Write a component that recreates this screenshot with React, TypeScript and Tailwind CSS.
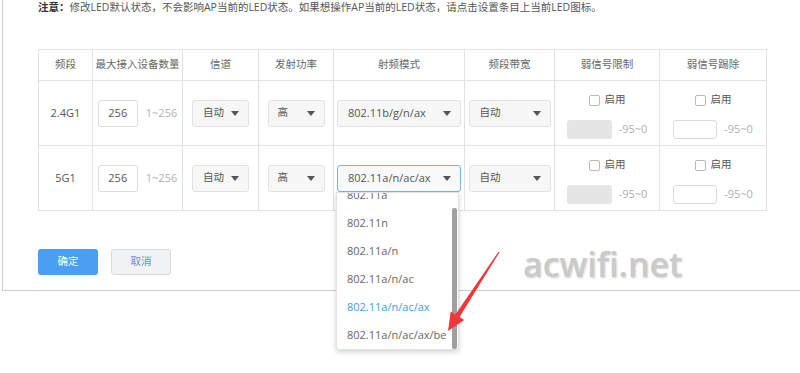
import React from "react";

const Caret = () => (
  <svg width="8" height="5" viewBox="0 0 8 5" className="shrink-0">
    <path d="M0 0 L8 0 L4 5 Z" fill="#555" />
  </svg>
);

function Select({ w, label, focused, pl = "pl-[10px]" }: { w: string; label: string; focused?: boolean; pl?: string }) {
  return (
    <div
      className={`${w} h-[27px] rounded-[3px] border ${
        focused ? "border-[#7fb2e0] bg-[#f7f9fb]" : "border-[#e2e2e2] bg-[#f7f7f7]"
      } flex items-center justify-between ${pl} pr-[9px] text-[#555]`}
    >
      <span className={/^[0-9]/.test(label) ? "text-[11px]" : "text-[10.5px]"}>{label}</span>
      <Caret />
    </div>
  );
}

function Check() {
  return (
    <div className="h-[20px] flex items-center justify-center gap-[5px]">
      <span className="w-[11px] h-[11px] border border-[#b8b8b8] rounded-[2px] bg-white" />
      <span className="text-[10.5px] text-[#555]">启用</span>
    </div>
  );
}

function Weak({ gray }: { gray?: boolean }) {
  return (
    <div className="flex flex-col items-center pt-[9px] h-full">
      <Check />
      <div className="mt-[10px] flex items-center gap-[7px]">
        {gray ? (
          <span className="w-[45px] h-[19px] bg-[#e5e5e5] rounded-[3px]" />
        ) : (
          <span className="w-[44px] h-[19px] border border-[#dadada] rounded-[3px] bg-white" />
        )}
        <span className="text-[11px] text-[#b0b0b0]">-95~0</span>
      </div>
    </div>
  );
}

function Row({ band, mode, focused }: { band: string; mode: string; focused?: boolean }) {
  const td = "border border-[#e2e2e2] p-0 align-middle";
  return (
    <tr className="h-[65px]">
      <td className={`${td} text-center text-[11px] text-[#555]`}>{band}</td>
      <td className={td}>
        <div className="flex items-center justify-center gap-[8px]">
          <span className="w-[40px] h-[27px] border border-[#dcdcdc] rounded-[3px] flex items-center justify-center text-[11px] text-[#555]">
            256
          </span>
          <span className="text-[11px] text-[#b0b0b0]">1~256</span>
        </div>
      </td>
      <td className={td}>
        <div className="flex justify-center">
          <Select w="w-[57px]" label="自动" />
        </div>
      </td>
      <td className={td}>
        <div className="flex justify-center">
          <Select w="w-[57px]" label="高" pl="pl-[9px]" />
        </div>
      </td>
      <td className={td}>
        <div className="flex justify-center">
          <Select w="w-[124px]" label={mode} focused={focused} />
        </div>
      </td>
      <td className={td}>
        <div className="flex justify-center">
          <Select w="w-[82px]" label="自动" />
        </div>
      </td>
      <td className={`${td} align-top`}>
        <Weak gray />
      </td>
      <td className={`${td} align-top`}>
        <Weak />
      </td>
    </tr>
  );
}

export default function App() {
  const th = "border border-[#e2e2e2] p-0 font-normal text-[10.5px] text-[#666] text-center align-middle";
  const items = ["802.11a", "802.11n", "802.11a/n", "802.11a/n/ac", "802.11a/n/ac/ax", "802.11a/n/ac/ax/be"];
  return (
    <div className="w-[800px] h-[373px] bg-white relative overflow-hidden font-['Open_Sans','Noto_Sans_CJK_SC',sans-serif]">
      <div className="ml-[2px] h-[291px] border-l border-b border-[#c5ced6] pl-[35px]">
        <p className="h-[14px] leading-[14px] text-[10.5px] text-[#555] whitespace-nowrap">
          <span className="font-bold text-[#333]">注意：</span>
          修改LED默认状态，不会影响AP当前的LED状态。如果想操作AP当前的LED状态，请点击设置条目上当前LED图标。
        </p>
        <table className="mt-[35px] w-[728px] table-fixed border-collapse">
          <colgroup>
            <col className="w-[54px]" />
            <col className="w-[90px]" />
            <col className="w-[76px]" />
            <col className="w-[75px]" />
            <col className="w-[131px]" />
            <col className="w-[90px]" />
            <col className="w-[105px]" />
            <col className="w-[107px]" />
          </colgroup>
          <thead>
            <tr className="h-[31px]">
              <th className={th}>频段</th>
              <th className={th}>最大接入设备数量</th>
              <th className={th}>信道</th>
              <th className={th}>发射功率</th>
              <th className={th}>射频模式</th>
              <th className={th}>频段带宽</th>
              <th className={th}>弱信号限制</th>
              <th className={th}>弱信号踢除</th>
            </tr>
          </thead>
          <tbody>
            <Row band="2.4G1" mode="802.11b/g/n/ax" />
            <Row band="5G1" mode="802.11a/n/ac/ax" focused />
          </tbody>
        </table>
        <div className="mt-[38px] flex gap-[13px]">
          <button className="w-[60px] h-[26px] rounded-[3px] bg-[#4a9ff5] text-white text-[10.5px]">确定</button>
          <button className="w-[60px] h-[26px] rounded-[3px] bg-[#f1f2f4] border border-[#d9dadc] text-[#6f8fc4] text-[10.5px]">
            取消
          </button>
        </div>
      </div>

      <div className="absolute left-[523px] top-[247px] text-[34px] font-semibold leading-none text-[#cacaca] [text-shadow:1px_1px_2px_rgba(0,0,0,0.18)] font-['Open_Sans',sans-serif]">
        acwifi.net
      </div>

      <div className="absolute left-[336px] top-[192px] w-[123px] h-[158px] overflow-hidden bg-white border border-[#e2e2e2] rounded-b-[3px] shadow-[0_2px_5px_rgba(0,0,0,0.18)]">
        <div className="-mt-[12px]">
          {items.map((it) => (
            <div
              key={it}
              className={`h-[28px] leading-[28px] pl-[10px] text-[11px] ${
                it === "802.11a/n/ac/ax" ? "text-[#3d9fdc]" : "text-[#666]"
              }`}
            >
              {it}
            </div>
          ))}
        </div>
        <div className="absolute right-[1px] top-[15px] w-[5px] h-[141px] bg-[#a0a0a0] rounded-[2px]" />
      </div>

      <svg className="absolute left-0 top-0" width="800" height="373" viewBox="0 0 800 373">
        <polygon
          points="498.5,251.7 499.5,252.3 459.6,317 464.3,319.9 448,331 450.7,311.5 455.4,314.4"
          fill="#f0383a"
        />
      </svg>
    </div>
  );
}
